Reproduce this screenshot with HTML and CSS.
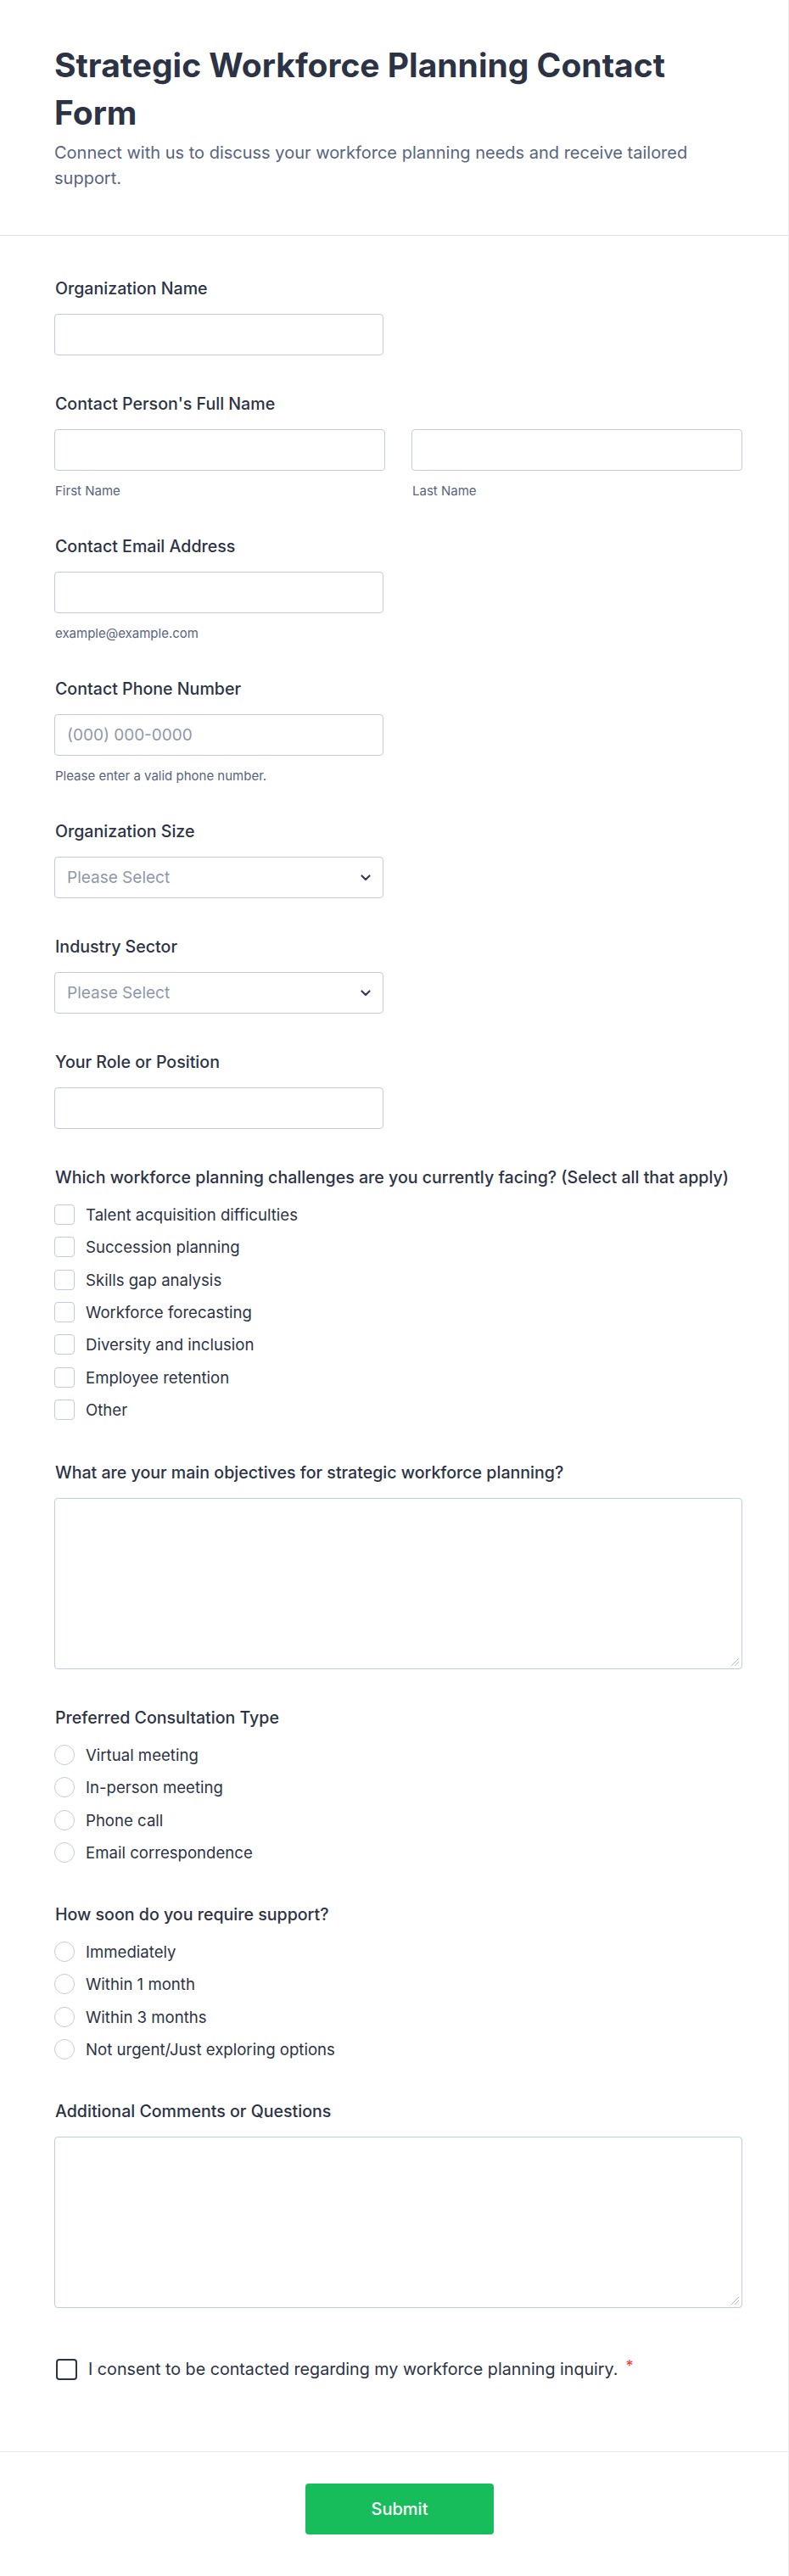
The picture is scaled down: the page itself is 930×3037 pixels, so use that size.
FILE: index.html
```html
<!DOCTYPE html>
<html lang="en">
<head>
<meta charset="utf-8">
<title>Strategic Workforce Planning Contact Form</title>
<link rel="stylesheet" href="styles.css">
</head>
<body>
<div class="page">
  <header class="form-header">
    <h1 class="title">Strategic Workforce Planning Contact Form</h1>
    <p class="subtitle">Connect with us to discuss your workforce planning needs and receive tailored support.</p>
  </header>

  <form class="form-body">
    <div class="field">
      <label class="label">Organization Name</label>
      <div class="input half"></div>
    </div>

    <div class="field">
      <label class="label">Contact Person's Full Name</label>
      <div class="name-grid">
        <div>
          <div class="input"></div>
          <div class="sublabel">First Name</div>
        </div>
        <div>
          <div class="input"></div>
          <div class="sublabel">Last Name</div>
        </div>
      </div>
    </div>

    <div class="field">
      <label class="label">Contact Email Address</label>
      <div class="input half"></div>
      <div class="sublabel">example@example.com</div>
    </div>

    <div class="field">
      <label class="label">Contact Phone Number</label>
      <div class="input half"><span class="placeholder">(000) 000-0000</span></div>
      <div class="sublabel">Please enter a valid phone number.</div>
    </div>

    <div class="field">
      <label class="label">Organization Size</label>
      <div class="input half select"><span class="placeholder">Please Select</span>
        <svg class="chevron" width="12" height="8" viewBox="0 0 12 8"><path d="M1.5 1.5 L6 6 L10.5 1.5" fill="none" stroke="#343c54" stroke-width="2.2" stroke-linecap="round" stroke-linejoin="round"/></svg>
      </div>
    </div>

    <div class="field">
      <label class="label">Industry Sector</label>
      <div class="input half select"><span class="placeholder">Please Select</span>
        <svg class="chevron" width="12" height="8" viewBox="0 0 12 8"><path d="M1.5 1.5 L6 6 L10.5 1.5" fill="none" stroke="#343c54" stroke-width="2.2" stroke-linecap="round" stroke-linejoin="round"/></svg>
      </div>
    </div>

    <div class="field">
      <label class="label">Your Role or Position</label>
      <div class="input half"></div>
    </div>

    <div class="field">
      <label class="label">Which workforce planning challenges are you currently facing? (Select all that apply)</label>
      <ul class="options checks">
        <li class="option"><span class="box"></span>Talent acquisition difficulties</li>
        <li class="option"><span class="box"></span>Succession planning</li>
        <li class="option"><span class="box"></span>Skills gap analysis</li>
        <li class="option"><span class="box"></span>Workforce forecasting</li>
        <li class="option"><span class="box"></span>Diversity and inclusion</li>
        <li class="option"><span class="box"></span>Employee retention</li>
        <li class="option"><span class="box"></span>Other</li>
      </ul>
    </div>

    <div class="field">
      <label class="label">What are your main objectives for strategic workforce planning?</label>
      <div class="textarea"><span class="grip"></span></div>
    </div>

    <div class="field">
      <label class="label">Preferred Consultation Type</label>
      <ul class="options radios">
        <li class="option"><span class="radio"></span>Virtual meeting</li>
        <li class="option"><span class="radio"></span>In-person meeting</li>
        <li class="option"><span class="radio"></span>Phone call</li>
        <li class="option"><span class="radio"></span>Email correspondence</li>
      </ul>
    </div>

    <div class="field">
      <label class="label">How soon do you require support?</label>
      <ul class="options radios">
        <li class="option"><span class="radio"></span>Immediately</li>
        <li class="option"><span class="radio"></span>Within 1 month</li>
        <li class="option"><span class="radio"></span>Within 3 months</li>
        <li class="option"><span class="radio"></span>Not urgent/Just exploring options</li>
      </ul>
    </div>

    <div class="field">
      <label class="label">Additional Comments or Questions</label>
      <div class="textarea"><span class="grip"></span></div>
    </div>

    <div class="consent">
      <span class="consent-box"></span>
      <span class="consent-text">I consent to be contacted regarding my workforce planning inquiry.</span>
      <span class="required">*</span>
    </div>
  </form>

  <footer class="form-footer">
    <button type="button" class="submit">Submit</button>
  </footer>
</div>
</body>
</html>
```

FILE: styles.css
```css
* { box-sizing: border-box; }

html, body {
  margin: 0;
  padding: 0;
  background: #ffffff;
}

body {
  font-family: Inter, "Noto Sans", "Liberation Sans", sans-serif;
  color: #2c3345;
}

.page {
  width: 930px;
  min-height: 3037px;
  border-right: 1px solid #e8eaf0;
}

/* Header */
.form-header {
  padding: 49px 54px 52px 64px;
  border-bottom: 1px solid #dfe1ea;
}

.title {
  margin: 0;
  font-size: 39px;
  line-height: 56px;
  font-weight: 700;
  color: #2c3345;
}

.subtitle {
  margin: 4px 0 0 0;
  font-size: 20px;
  line-height: 30px;
  color: #57647e;
}

/* Body */
.form-body {
  padding: 28px 54px 0 64px;
}

.field {
  padding: 22px 0 23px 0;
}

.label {
  display: block;
  font-size: 19.6px;
  line-height: 24px;
  font-weight: 500;
  color: #2c3345;
  margin: 0 0 18px 1px;
}

.input {
  height: 49px;
  border: 1px solid #c3cad8;
  border-radius: 4px;
  background: #fff;
  display: flex;
  align-items: center;
  padding: 0 14px;
}

.half { width: 388px; }

.placeholder {
  color: #8e98ab;
  font-size: 19px;
}

.select { justify-content: space-between; }

.chevron { display: block; }

.name-grid {
  display: grid;
  grid-template-columns: 390px 390px;
  column-gap: 31px;
}

.sublabel {
  margin: 16px 0 0 1px;
  font-size: 15px;
  line-height: 16px;
  color: #57647e;
}

/* Option lists */
.options {
  list-style: none;
  margin: 20px 0 0 0;
  padding: 0;
  display: flex;
  flex-direction: column;
  gap: 14.33px;
}

.checks { margin-bottom: 5px; }
.radios { margin-bottom: 4px; }

.option {
  display: flex;
  align-items: center;
  height: 24px;
  font-size: 18.6px;
  color: #2c3345;
}

.box,
.radio {
  width: 24px;
  height: 24px;
  border: 1px solid #c3cad8;
  margin-right: 13px;
  flex: none;
}

.box { border-radius: 4px; }
.radio { border-radius: 50%; }

/* Text areas */
.textarea {
  height: 202px;
  border: 1px solid #c3cad8;
  border-radius: 4px;
  position: relative;
}

.grip {
  position: absolute;
  right: 3px;
  bottom: 3px;
  width: 9px;
  height: 9px;
  background: linear-gradient(135deg, transparent 0 45%, #b0b6c2 45% 55%, transparent 55% 100%);
}

.grip::after {
  content: "";
  position: absolute;
  right: 0;
  bottom: 0;
  width: 5px;
  height: 5px;
  background: linear-gradient(135deg, transparent 0 42%, #b0b6c2 42% 58%, transparent 58% 100%);
}

/* Consent */
.consent {
  display: flex;
  align-items: flex-start;
  margin: 37px 0 0 2px;
  padding-bottom: 84px;
}

.consent-box {
  width: 25px;
  height: 25px;
  border: 2px solid #2c3345;
  border-radius: 4px;
  flex: none;
  margin-right: 13px;
}

.consent-text {
  font-size: 19.7px;
  line-height: 25px;
  color: #2c3345;
}

.required {
  color: #f23a3c;
  font-size: 18px;
  line-height: 18px;
  margin: 0 0 0 9px;
}

/* Footer */
.form-footer {
  border-top: 1px solid #e6e9f1;
  padding: 37px 51px 0 64px;
  display: flex;
  justify-content: center;
}

.submit {
  width: 222px;
  height: 60px;
  background: #18bd5b;
  border: none;
  border-radius: 4px;
  color: #ffffff;
  font-family: Inter, "Noto Sans", sans-serif;
  font-size: 20px;
  font-weight: 500;
}
```
